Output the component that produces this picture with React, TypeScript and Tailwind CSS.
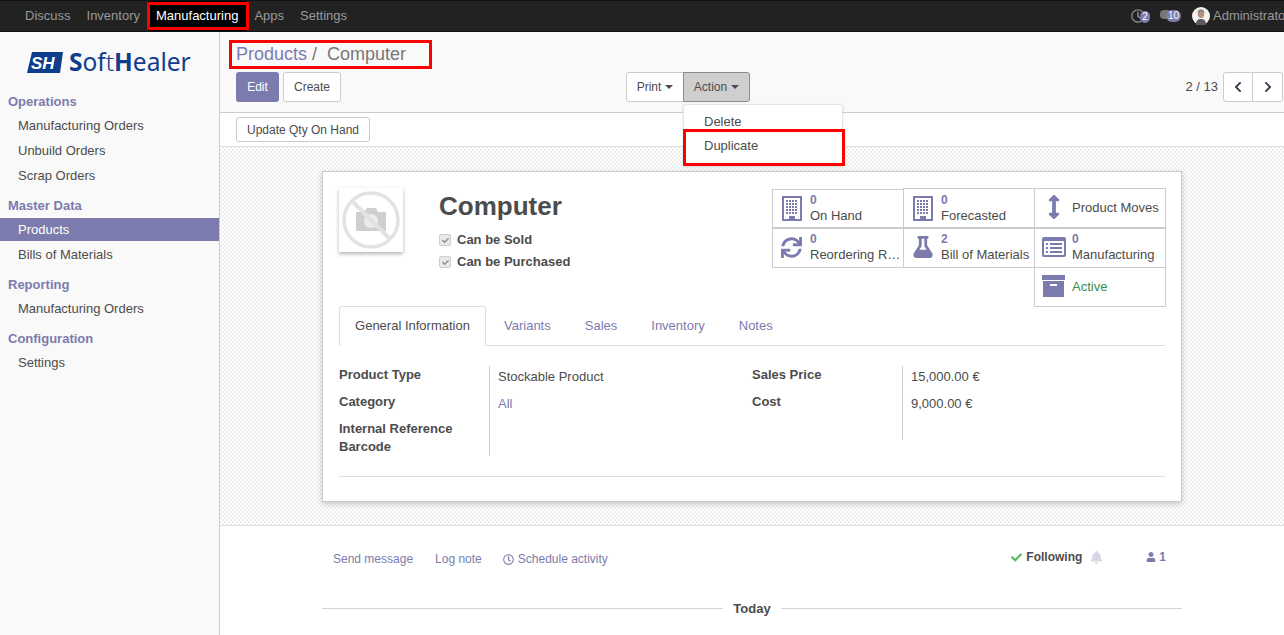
import React from "react";
import {
  FaArrowsAltV,
  FaBell,
  FaCheck,
  FaChevronLeft,
  FaChevronRight,
  FaFlask,
  FaRegClock,
  FaSync,
  FaUser,
} from "react-icons/fa";

const sections = [
  { title: "Operations", items: ["Manufacturing Orders", "Unbuild Orders", "Scrap Orders"] },
  { title: "Master Data", items: ["Products", "Bills of Materials"] },
  { title: "Reporting", items: ["Manufacturing Orders"] },
  { title: "Configuration", items: ["Settings"] },
];

function BuildingIcon() {
  return (
    <svg width="20" height="25" viewBox="0 0 20 25" fill="#7c7bad">
      <path d="M0 0h20v25H0zM2 2v21h5v-3h6v3h5V2z" fillRule="evenodd" />
      {[4, 7, 10, 13, 16].flatMap((y) =>
        [4, 7, 10, 13].map((x) => <rect key={`${x}-${y}`} x={x} y={y} width="2" height="2" />)
      )}
    </svg>
  );
}

function ArchiveIcon() {
  return (
    <svg width="23" height="22" viewBox="0 0 23 22" fill="#7c7bad">
      <rect x="0" y="0" width="23" height="5" />
      <path d="M1 6h21v16H1zM8 9v2h7V9z" fillRule="evenodd" />
    </svg>
  );
}

function ListIcon() {
  return (
    <svg width="24" height="20" viewBox="0 0 24 20" fill="#7c7bad">
      <path d="M2 0h20a2 2 0 0 1 2 2v16a2 2 0 0 1-2 2H2a2 2 0 0 1-2-2V2a2 2 0 0 1 2-2zM2 4v14h20V4z" fillRule="evenodd" />
      {[6, 10, 14].map((y) => (
        <React.Fragment key={y}>
          <rect x="4" y={y} width="2" height="2" />
          <rect x="8" y={y} width="12" height="2" />
        </React.Fragment>
      ))}
    </svg>
  );
}

function NoImage() {
  return (
    <svg width="58" height="58" viewBox="0 0 58 58">
      <circle cx="29" cy="29" r="27" fill="none" stroke="#e2e2e2" strokeWidth="3.5" />
      <path d="M14 21h8l3-4h9l2 4h8v19H14z" fill="#cfcfcf" />
      <circle cx="29" cy="30" r="7" fill="#ececec" />
      <line x1="10" y1="10" x2="48" y2="48" stroke="#e2e2e2" strokeWidth="4" />
    </svg>
  );
}

function Logo() {
  return (
    <div className="flex items-center h-[57px] pt-[3px] pl-[27px] text-[#0f3c8c]">
      <svg width="36" height="21" viewBox="0 0 36 21" className="mr-[6px] shrink-0">
        <polygon points="5,0 36,0 33,21 0,21" fill="#0f3c8c" />
        <text x="4" y="17" fontSize="17" fontWeight="bold" fontStyle="italic" fill="#fff" fontFamily="Liberation Sans">
          SH
        </text>
      </svg>
      <span className="text-[24.5px] leading-none whitespace-nowrap font-['Noto_Sans',sans-serif]">
        <b>S</b>of<span className="font-light">t</span>
        <b>H</b>ealer
      </span>
    </div>
  );
}

function StatButton({
  icon,
  value,
  label,
  className = "",
  labelClass = "text-[#4c4c4c]",
}: {
  icon: React.ReactNode;
  value?: string;
  label: string;
  className?: string;
  labelClass?: string;
}) {
  return (
    <div className={`flex items-center h-[40px] border border-[#cccccc] -ml-px -mt-px bg-white ${className}`}>
      <div className="w-[37px] flex justify-center shrink-0 text-[#7c7bad]">{icon}</div>
      <div className="min-w-0 flex-1 pr-[2px] leading-[15px]">
        {value && <div className="font-bold text-[12px] text-[#7c7bad]">{value}</div>}
        <div className={`truncate ${labelClass}`}>{label}</div>
      </div>
    </div>
  );
}

export default function App() {
  return (
    <div className="h-[635px] w-[1284px] overflow-hidden flex flex-col bg-white text-[13px] text-[#4c4c4c] font-['Liberation_Sans',Arial,sans-serif]">
      {/* top navbar */}
      <nav className="h-[32px] shrink-0 bg-[#222222] border-y border-[#111111] flex items-center text-[#9a9a9a] pl-[17px]">
        {["Discuss", "Inventory"].map((item) => (
          <span key={item} className="px-[8px]">
            {item}
          </span>
        ))}
        <span className="relative px-[8px] h-full flex items-center bg-black text-white">
          Manufacturing
          <span className="absolute -left-px top-[1px] h-[28px] w-[102px] border-[3px] border-[#ff0000]" />
        </span>
        <span className="px-[8px]">Apps</span>
        <span className="px-[8px]">Settings</span>
        <div className="ml-auto flex items-center text-[#8a8a8a]">
          <span className="relative mr-[9px] w-[20px] h-[16px]">
            <FaRegClock size={14} className="absolute left-0 top-[1px]" />
            <span className="absolute left-[9px] top-[3px] h-[12px] w-[10px] rounded-full bg-[#7c7bad] text-white text-[10px] leading-[12px] text-center">
              2
            </span>
          </span>
          <span className="relative mr-[11px] w-[21px] h-[16px]">
            <span className="absolute left-0 top-[2px] w-[11px] h-[9px] rounded-[4px] bg-[#777777]" />
            <span className="absolute left-[6px] top-[2px] h-[12px] w-[15px] rounded-full bg-[#7c7bad] text-white text-[10px] leading-[12px] text-center">
              10
            </span>
          </span>
          <svg width="18" height="18" viewBox="0 0 18 18" className="mr-[3px]">
            <circle cx="9" cy="9" r="9" fill="#f4f2f0" />
            <ellipse cx="9" cy="7" rx="3.2" ry="4" fill="#b58f78" />
            <path d="M5.5 6c0-5 7-5 7 0-2-1.5-5-1.5-7 0z" fill="#8a8a8a" />
            <path d="M4 18c0-5 2-6 5-6s5 1 5 6z" fill="#5d5a5c" />
          </svg>
          <span className="w-[71px] overflow-hidden whitespace-nowrap text-[#9a9a9a]">Administrator</span>
        </div>
      </nav>

      <div className="flex flex-1 min-h-0">
        {/* sidebar */}
        <aside className="w-[220px] shrink-0 bg-[#f9f9f9] border-r border-[#cccccc]">
          <Logo />
          {sections.map((section) => (
            <div key={section.title} className="mb-[5px]">
              <div className="h-[24px] pt-[2px] flex items-center pl-[8px] font-bold text-[#7c7bad]">{section.title}</div>
              {section.items.map((item) => (
                <div key={item} className="h-[25px] flex items-center">
                  <div
                    className={`w-full h-[23px] flex items-center pl-[18px] ${
                      item === "Products" ? "bg-[#7c7bad] text-white" : ""
                    }`}
                  >
                    {item}
                  </div>
                </div>
              ))}
            </div>
          ))}
        </aside>

        <main className="flex-1 min-w-0 flex flex-col">
          {/* control panel */}
          <div className="h-[81px] shrink-0 bg-[#f9f9f9] border-b border-[#cccccc] pl-[16px] pr-[1px]">
            <div className="h-[40px] pt-[8px]">
              <div className="relative -ml-[7px] pl-[7px] w-[203px] h-[29px] border-[3px] border-[#ff0000] flex items-center text-[18px] whitespace-pre">
                <span className="text-[#7c7bad] -ml-[3px]">Products</span>
                <span className="text-[#777777]"> /  Computer</span>
              </div>
            </div>
            <div className="flex items-center h-[30px] text-[12px]">
              <div className="w-[390px] flex gap-[4px]">
                <button className="w-[43px] h-[30px] rounded-[3px] bg-[#7c7bad] text-white">Edit</button>
                <button className="w-[58px] h-[30px] rounded-[3px] bg-white border border-[#cccccc]">Create</button>
              </div>
              <div className="relative flex">
                <button className="w-[58px] h-[30px] rounded-l-[3px] bg-white border border-[#cccccc] -mr-px flex items-center justify-center">
                  Print
                  <span className="ml-[4px] border-x-[4px] border-t-[4px] border-x-transparent border-t-[#4c4c4c]" />
                </button>
                <button className="w-[67px] h-[30px] rounded-r-[3px] bg-[#cfcfcf] border border-[#8c8c8c] flex items-center justify-center">
                  Action
                  <span className="ml-[4px] border-x-[4px] border-t-[4px] border-x-transparent border-t-[#4c4c4c]" />
                </button>
                {/* open Action dropdown */}
                <div className="absolute z-10 left-[57px] top-[32px] w-[160px] h-[62px] bg-white border border-[#e4e4e4] rounded-[3px] pt-[5px] text-[13px] shadow-sm">
                  <div className="h-[24px] flex items-center pl-[20px]">Delete</div>
                  <div className="h-[24px] flex items-center pl-[20px]">Duplicate</div>
                  <div className="absolute -left-px top-[24px] w-[162px] h-[37px] border-[3px] border-[#ff0000]" />
                </div>
              </div>
              <div className="ml-auto flex items-center text-[13px]">
                <span className="mr-[5px]">2 / 13</span>
                <button className="w-[30px] h-[30px] bg-white border border-[#cccccc] rounded-l-[3px] flex items-center justify-center -mr-px">
                  <FaChevronLeft size={12} className="text-[#3b3b4f]" />
                </button>
                <button className="w-[31px] h-[30px] bg-white border border-[#cccccc] rounded-r-[3px] flex items-center justify-center">
                  <FaChevronRight size={12} className="text-[#3b3b4f]" />
                </button>
              </div>
            </div>
          </div>

          {/* status bar */}
          <div className="h-[34px] shrink-0 bg-white border-b border-[#dddddd] pl-[16px] flex items-center">
            <button className="w-[134px] h-[25px] rounded-[3px] bg-white border border-[#cccccc] text-[12px]">
              Update Qty On Hand
            </button>
          </div>

          {/* sheet */}
          <div className="h-[379px] shrink-0 border-b border-[#dddddd] pt-[24px] pl-[102px] bg-[repeating-conic-gradient(#eeeeee_0_25%,#ffffff_0_50%)] bg-[length:4px_4px]">
            <div className="w-[860px] h-[331px] bg-white border border-[#cccccc] shadow-[0_2px_6px_rgba(0,0,0,0.2)] pt-[16px] px-[16px]">
              <div className="flex h-[118px]">
                <div className="w-[64px] h-[64px] shrink-0 flex items-center justify-center bg-white shadow-[0_2px_4px_rgba(0,0,0,0.3)]">
                  <NoImage />
                </div>
                <div className="ml-[36px] w-[334px] shrink-0">
                  <div className="text-[26px] font-bold leading-[36px]">Computer</div>
                  <div className="mt-[7px] flex flex-col gap-[4px] font-bold">
                    {["Can be Sold", "Can be Purchased"].map((label) => (
                      <div key={label} className="h-[18px] flex items-center gap-[6px]">
                        <span className="w-[12px] h-[12px] rounded-[2px] bg-[#e9e9e9] border border-[#cfcfcf] flex items-center justify-center">
                          <FaCheck size={7} className="text-[#8f8f8f]" />
                        </span>
                        {label}
                      </div>
                    ))}
                  </div>
                </div>
                <div className="w-[393px] shrink-0 grid grid-cols-3 grid-rows-[40px_39px_39px] pt-px">
                  <StatButton icon={<BuildingIcon />} value="0" label="On Hand" className="mt-0! h-[39px]! pb-px" />
                  <StatButton icon={<BuildingIcon />} value="0" label="Forecasted" />
                  <StatButton icon={<FaArrowsAltV size={24} />} label="Product Moves" className="pb-[2px]" />
                  <StatButton icon={<FaSync size={21} />} value="0" label="Reordering Rules" className="pb-[2px]" />
                  <StatButton icon={<FaFlask size={22} />} value="2" label="Bill of Materials" className="pb-[2px]" />
                  <StatButton icon={<ListIcon />} value="0" label="Manufacturing" className="pb-[2px]" />
                  <StatButton
                    icon={<ArchiveIcon />}
                    label="Active"
                    labelClass="text-[#3c8c4c]"
                    className="col-start-3 pb-[2px]"
                  />
                </div>
              </div>

              {/* tabs */}
              <div className="flex h-[40px] border-b border-[#dddddd]">
                <div className="w-[147px] h-[40px] mr-px flex items-center justify-center bg-white border border-[#dddddd] border-b-white rounded-t-[3px]">
                  General Information
                </div>
                {["Variants", "Sales", "Inventory", "Notes"].map((tab) => (
                  <div key={tab} className="px-[17px] h-[39px] flex items-center text-[#7c7bad]">
                    {tab}
                  </div>
                ))}
              </div>

              {/* product fields */}
              <div className="flex mt-[20px]">
                <div className="w-[150px] font-bold leading-[18px] flex flex-col gap-[9px]">
                  <div>Product Type</div>
                  <div>Category</div>
                  <div>
                    Internal Reference
                    <div>Barcode</div>
                  </div>
                </div>
                <div className="w-[263px] h-[90px] border-l border-[#cccccc] pl-[8px] pt-[2px] leading-[18px] flex flex-col gap-[9px]">
                  <div>Stockable Product</div>
                  <div className="text-[#7c7bad]">All</div>
                </div>
                <div className="w-[150px] font-bold leading-[18px] flex flex-col gap-[9px]">
                  <div>Sales Price</div>
                  <div>Cost</div>
                </div>
                <div className="h-[74px] border-l border-[#cccccc] pl-[8px] pt-[2px] leading-[18px] flex flex-col gap-[9px]">
                  <div>15,000.00 €</div>
                  <div>9,000.00 €</div>
                </div>
              </div>
              <div className="mt-[20px] border-t border-[#dddddd]" />
            </div>
          </div>

          {/* chatter */}
          <div className="flex-1 pl-[102px] pr-[102px] bg-white">
            <div className="h-[62px] pl-[11px] pr-[16px] flex items-center justify-between text-[12px]">
              <div className="flex items-center text-[#7c7bad] pt-[4px]">
                <span className="mr-[22px]">Send message</span>
                <span className="mr-[21px]">Log note</span>
                <FaRegClock size={11} className="mr-[4px]" />
                <span>Schedule activity</span>
              </div>
              <div className="flex items-center">
                <FaCheck size={11} className="text-[#5cb85c] mr-[4px]" />
                <span className="font-bold">Following</span>
                <FaBell size={13} className="ml-[8px] text-[#d6d6e4]" />
                <FaUser size={10} className="ml-[43px] mr-[3px] text-[#7c7bad]" />
                <span className="font-bold text-[#7c7bad]">1</span>
              </div>
            </div>
            <div className="flex items-center mt-[11px]">
              <div className="flex-1 border-t border-[#d5d5d5]" />
              <span className="px-[10px] font-bold">Today</span>
              <div className="flex-1 border-t border-[#d5d5d5]" />
            </div>
          </div>
        </main>
      </div>
    </div>
  );
}
